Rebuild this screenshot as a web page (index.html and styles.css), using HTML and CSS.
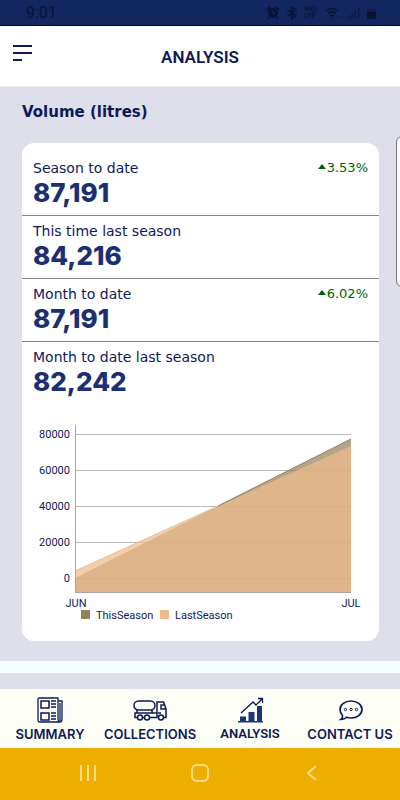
FILE: index.html
```html
<!DOCTYPE html>
<html lang="en">
<head>
<meta charset="utf-8">
<meta name="viewport" content="width=device-width, initial-scale=1">
<title>Analysis</title>
<link rel="stylesheet" href="styles.css">
</head>
<body>
<div class="app">
  <div class="status">
    <span class="clock">9:01</span>
    <div class="status-icons">
      <svg width="14" height="14" viewBox="0 0 14 14"><circle cx="7" cy="7" r="5"/><path d="M1 4L4 1M13 4L10 1M3 11l-1 2M11 11l1 2" stroke="currentColor" stroke-width="2"/><path d="M7 4v3.500h2.500" stroke="#12265f" stroke-width="1.300" fill="none"/></svg>
      <svg width="12" height="14" viewBox="0 0 12 14"><path d="M2 4l8 6-4 3V1l4 3-8 6M1 7h1M10 7h1" fill="none" stroke="currentColor" stroke-width="1.500"/></svg>
      <span class="volte">Vo))<br>LTE</span>
      <svg class="wifi" width="17" height="14" viewBox="0 0 17 14"><path d="M1 5q6-5 12 0M3 7.500q4-3.500 8 0M5 10q2-2 4 0" fill="none" stroke="currentColor" stroke-width="1.300"/><circle cx="7" cy="12" r="1"/><path d="M11 10l1.500 2 1-2M14 12l1.500-2 1 2" opacity=".5"/></svg>
      <svg width="12" height="14" viewBox="0 0 12 14"><path d="M0 10h2v3H0zM3 8h2v5H3zM6 5h2v8H6zM10 2h1.500v11H10z" opacity=".6"/></svg>
      <svg width="12" height="14" viewBox="0 0 12 14"><path d="M4 1h3v2h3v3H1V3h3z" opacity=".35"/><path d="M1 6h9v7H1z"/></svg>
    </div>
  </div>

  <header class="header">
    <button class="menu" type="button" aria-label="Menu">
      <svg width="20" height="18" viewBox="0 0 20 18"><path d="M1 2h19M1 9h19M1 16h9" stroke="currentColor" stroke-width="2"/></svg>
    </button>
    <h1 class="title">ANALYSIS</h1>
  </header>

  <main class="content">
    <section class="volume">
      <h2 class="heading">Volume (litres)</h2>
      <div class="carousel">
        <article class="card">
          <div class="metric">
            <div class="metric-top"><span>Season to date</span><span class="change"><svg width="8" height="8" viewBox="0 0 8 8"><path d="M0 5l4-5 4 5z"/></svg>3.53%</span></div>
            <strong class="number">87,191</strong>
          </div>
          <div class="metric">
            <div class="metric-top"><span>This time last season</span></div>
            <strong class="number">84,216</strong>
          </div>
          <div class="metric">
            <div class="metric-top"><span>Month to date</span><span class="change"><svg width="8" height="8" viewBox="0 0 8 8"><path d="M0 5l4-5 4 5z"/></svg>6.02%</span></div>
            <strong class="number">87,191</strong>
          </div>
          <div class="metric">
            <div class="metric-top"><span>Month to date last season</span></div>
            <strong class="number">82,242</strong>
          </div>
          <svg class="chart" viewBox="0 0 357 237" role="img" aria-label="Volume this season and last season">
            <path class="grid" d="M53 30.500h276M53 66.500h276M53 102.500h276M53 138.500h276M53 174.500h276"/>
            <path class="this-area" d="M53 174L329 35V188H53z"/>
            <path class="last-area" d="M53 167L329 42V188H53z"/>
            <path class="this-line" d="M196 102L329 35"/>
            <path class="last-line" d="M53 167L196 102"/>
            <path class="axis" d="M53.500 21V188.500H329"/>
            <g class="ticks" text-anchor="end">
              <text x="48" y="34">80000</text>
              <text x="48" y="70">60000</text>
              <text x="48" y="106">40000</text>
              <text x="48" y="142">20000</text>
              <text x="48" y="178">0</text>
            </g>
            <g class="ticks" text-anchor="middle">
              <text x="54" y="203">JUN</text>
              <text x="329" y="203">JUL</text>
            </g>
            <g class="ticks">
              <rect x="59" y="206" width="9" height="9" fill="#94805a"/>
              <text x="74" y="215">ThisSeason</text>
              <rect x="138" y="206" width="9" height="9" fill="#f0bb8a"/>
              <text x="153" y="215">LastSeason</text>
            </g>
          </svg>
        </article>
        <article class="next-card"></article>
      </div>
    </section>
    <section class="following"></section>
  </main>

  <nav class="tabs">
    <a class="tab" href="#summary">
      <svg width="28" height="28" viewBox="0 0 28 28" fill="none" stroke="currentColor" stroke-width="1.300"><path d="M3 2h19v20q0 4 2 4H4q-2 0-2-2V3zM22 5h4v18q0 3-2 3M24 7v18"/><path d="M5 5h8v7H5zM5 17h8v7H5z" stroke-width="1.500"/><path d="M15 5h5M15 8h5M15 11h5M15 17h5M15 20h5M15 23h5"/></svg>
      <span>SUMMARY</span>
    </a>
    <a class="tab" href="#collections">
      <svg width="34" height="28" viewBox="0 0 34 28" fill="none" stroke="currentColor" stroke-width="1.500"><rect x="1" y="5" width="21" height="9" rx="4.500"/><path d="M4.500 21.500H2V17h22M9.500 21.500h2M16.500 21.500H24V6h6.500L33 13v8.500h-2.500M4 14v3M19 14v3M32.500 13H28V9h3.500M25 17h3"/><circle cx="7" cy="21.500" r="2.500"/><circle cx="14" cy="21.500" r="2.500"/><circle cx="28" cy="21.500" r="2.500"/></svg>
      <span>COLLECTIONS</span>
    </a>
    <a class="tab tab-active" href="#analysis">
      <svg width="28" height="28" viewBox="0 0 28 28"><path d="M2 25h25v1.500H2zM4 20.500h6V25H4zM12.500 16h6v9h-6zM21 10h5v15h-5z" fill="#1d357b"/><path d="M5 17L17 6l3 3 6-6M22 2.500h4.500V7" fill="none" stroke="currentColor" stroke-width="1.300"/></svg>
      <span>ANALYSIS</span>
    </a>
    <a class="tab" href="#contact">
      <svg width="28" height="28" viewBox="0 0 28 28" fill="none" stroke="currentColor"><path d="M6.500 19.500Q4 17 4 13.500C4 8.500 9 5 15 5s11 3.500 11 8.500S21 22 15 22q-2.500 0-4.500-.7Q8.500 23.500 5 23.500 7 22 6.500 19.500z" stroke-width="1.700"/><g stroke-width="1"><circle cx="9.500" cy="13.500" r="1.200"/><circle cx="15" cy="13.500" r="1.200"/><circle cx="20.500" cy="13.500" r="1.200"/></g></svg>
      <span>CONTACT US</span>
    </a>
  </nav>

  <div class="system">
    <button type="button" aria-label="Recent apps"><svg width="18" height="18" viewBox="0 0 18 18"><path d="M2 1v16M9 1v16M16 1v16"/></svg></button>
    <button type="button" aria-label="Home"><svg width="18" height="18" viewBox="0 0 18 18"><rect x="1" y="1" width="16" height="16" rx="5"/></svg></button>
    <button type="button" aria-label="Back"><svg width="18" height="18" viewBox="0 0 18 18"><path d="M13 2L5 9l8 7"/></svg></button>
  </div>
</div>
</body>
</html>
```
FILE: styles.css
```css
* {
  box-sizing: border-box;
}

body {
  margin: 0;
  color: #0e1a58;
  font-family: "DejaVu Sans", sans-serif;
}

button {
  padding: 0;
  border: 0;
  background: none;
  color: inherit;
}

svg {
  display: block;
}

.app {
  display: flex;
  flex-direction: column;
  height: 100vh;
  background: #dfdfec;
}

.status {
  display: flex;
  justify-content: space-between;
  align-items: center;
  height: 26px;
  padding: 0 22px 0 26px;
  border-bottom: 1px solid #02040f;
  background: #12265f;
  color: #091333;
  font-family: Roboto, sans-serif;
}

.clock {
  font-size: 16px;
  line-height: 24px;
}

.status-icons {
  display: flex;
  align-items: center;
  gap: 6px;
  fill: currentColor;
}

.volte {
  width: 15px;
  font-size: 7px;
  font-weight: 700;
  line-height: 7px;
}

.header {
  display: grid;
  grid-template-columns: 40px 1fr 40px;
  align-items: center;
  height: 61px;
  padding-top: 2px;
  border-bottom: 1px solid #ececf2;
  background: #fff;
}

.menu {
  padding: 0 0 8px 12px;
}

.title {
  margin: 0;
  font: 600 17px/24px Roboto, sans-serif;
  text-align: center;
}

.content {
  flex: 1;
  min-height: 0;
  overflow: hidden;
}

.volume {
  padding: 15px 0 20px;
}

.heading {
  margin: 0;
  padding-left: 22px;
  font-size: 15px;
  line-height: 20px;
}

.carousel {
  display: flex;
  align-items: flex-start;
  gap: 17px;
  padding: 14px 0 0 22px;
  overflow: hidden;
}

.card {
  flex: 0 0 calc(100% - 21px);
  margin-top: 7px;
  padding-top: 10px;
  border-radius: 12px;
  background: #fff;
}

.next-card {
  flex: 0 0 80%;
  height: 151px;
  border: 1px solid #777;
  border-radius: 6px;
  background: #f8f8fc;
}

.metric {
  padding: 5px 11px 7px;
  border-bottom: 1px solid #85868a;
}

.metric:nth-child(4) {
  border-bottom: 0;
}

.metric-top {
  display: flex;
  justify-content: space-between;
  font-size: 14px;
  line-height: 20px;
}

.change {
  display: flex;
  align-items: center;
  gap: 1px;
  color: #006400;
  font-size: 13px;
  fill: currentColor;
}

.number {
  display: block;
  color: #1b2f72;
  font: 800 26px/30px Inter, sans-serif;
}

.chart {
  width: 100%;
  height: auto;
}

.grid {
  stroke: #b8b8bc;
}

.this-area {
  fill: #94805a;
  fill-opacity: 0.7;
}

.last-area {
  fill: #f0bb8a;
  fill-opacity: 0.72;
}

.this-line {
  stroke: #94805a;
}

.last-line {
  stroke: #e5bd96;
}

.axis {
  fill: none;
  stroke: #aaa5a5;
}

.ticks {
  fill: #0e1a58;
  font: 11px Roboto, sans-serif;
}

.following {
  height: 100px;
  border-top: 12px solid #f4fcff;
}

.tabs {
  display: grid;
  grid-template-columns: repeat(4, 1fr);
  height: 59px;
  padding-top: 7px;
  background: #fdfef6;
}

.tab {
  display: flex;
  flex-direction: column;
  align-items: center;
  gap: 2px;
  color: #0e1a58;
  font: 600 13px/16px Inter, sans-serif;
  text-decoration: none;
  white-space: nowrap;
}

.tab-active {
  font-family: Roboto, sans-serif;
}

.system {
  display: flex;
  justify-content: space-between;
  align-items: center;
  height: 52px;
  padding: 0 79px 2px;
  background: #eeae00;
}

.system svg {
  fill: none;
  stroke: #f8dc83;
  stroke-width: 2;
}
```
